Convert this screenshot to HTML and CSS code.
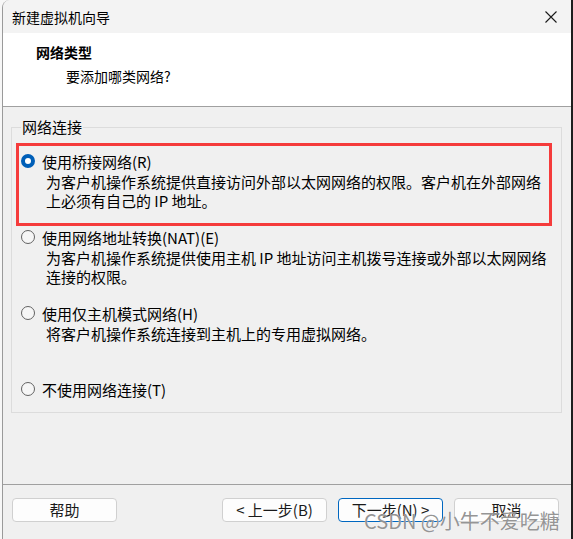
FILE: index.html
```html
<!DOCTYPE html>
<html lang="zh-CN">
<head>
  <meta charset="UTF-8">
  <title>新建虚拟机向导</title>
  <link rel="stylesheet" href="styles.css">
</head>
<body>
  <div class="window">
    <div class="titlebar">
      <span class="title">新建虚拟机向导</span>
      <svg class="close" width="12" height="12" viewBox="0 0 12 12">
        <path d="M0.5 0.5 L11.5 11.5 M11.5 0.5 L0.5 11.5" stroke="#1a1a1a" stroke-width="1.1" fill="none"/>
      </svg>
    </div>

    <div class="header">
      <div class="header-title">网络类型</div>
      <div class="header-sub">要添加哪类网络?</div>
    </div>

    <div class="content">
      <fieldset class="group">
        <legend>网络连接</legend>

        <div class="option highlighted">
          <div class="mark"></div>
          <label class="row"><span class="radio checked"></span>使用桥接网络(R)</label>
          <div class="desc">为客户机操作系统提供直接访问外部以太网网络的权限。客户机在外部网络<br>上必须有自己的 IP 地址。</div>
        </div>

        <div class="option">
          <label class="row"><span class="radio"></span>使用网络地址转换(NAT)(E)</label>
          <div class="desc">为客户机操作系统提供使用主机 IP 地址访问主机拨号连接或外部以太网网络<br>连接的权限。</div>
        </div>

        <div class="option">
          <label class="row"><span class="radio"></span>使用仅主机模式网络(H)</label>
          <div class="desc">将客户机操作系统连接到主机上的专用虚拟网络。</div>
        </div>

        <div class="option">
          <label class="row"><span class="radio"></span>不使用网络连接(T)</label>
        </div>
      </fieldset>
    </div>

    <div class="footer">
      <button class="btn">帮助</button>
      <div class="btn-group">
        <button class="btn">&lt; 上一步(B)</button>
        <button class="btn default">下一步(N) &gt;</button>
        <button class="btn">取消</button>
      </div>
    </div>

    <div class="watermark">CSDN @小牛不爱吃糖</div>
  </div>
</body>
</html>
```

FILE: styles.css
```css
html, body {
  margin: 0;
  padding: 0;
}
body {
  background: #f7f7f7;
  font-family: "Noto Sans CJK SC", "Noto Sans", sans-serif;
  color: #000;
}
.window {
  position: relative;
  box-sizing: border-box;
  margin-left: 2px;
  width: 571px;
  height: 539px;
  display: flex;
  flex-direction: column;
  background: #f0f0f0;
  border-left: 1px solid #9a9a9a;
  border-right: 2px solid #1e1e1e;
  border-top-left-radius: 8px;
  overflow: hidden;
}
.titlebar {
  height: 33px;
  flex: none;
  display: flex;
  align-items: center;
  justify-content: space-between;
  padding: 0 14px 0 9px;
  background: #f3f3f3;
  font-size: 14px;
}
.header {
  flex: none;
  background: #fff;
  border-bottom: 1px solid #a0a0a0;
  padding: 9px 0 0 33px;
  height: 64px;
}
.header-title {
  font-size: 14px;
  font-weight: bold;
  line-height: 20px;
}
.header-sub {
  font-size: 14px;
  line-height: 20px;
  margin: 4px 0 0 30px;
}
.content {
  flex: 1;
  padding: 10px 9px 0 8px;
}
.group {
  margin: 0;
  min-width: 0;
  border: 1px solid #dcdcdc;
  padding: 14px 9px 13px 9px;
  font-size: 15px;
}
.group legend {
  padding: 0 1px;
  line-height: 20px;
}
.option {
  position: relative;
  height: 76px;
}
.option:last-child {
  height: auto;
}
.row {
  display: flex;
  align-items: center;
  height: 20px;
  white-space: nowrap;
}
.radio {
  box-sizing: border-box;
  width: 14px;
  height: 14px;
  margin-right: 7px;
  border-radius: 50%;
  border: 1px solid #626262;
  background: #f6f6f6;
}
.radio.checked {
  border: 4px solid #005fb8;
  background: #fff;
}
.desc {
  margin: 1px 0 0 25px;
  line-height: 19px;
  white-space: nowrap;
}
.mark {
  position: absolute;
  left: -5px;
  top: -8px;
  width: 536px;
  height: 83px;
  box-sizing: border-box;
  border: 3px solid #f53b3b;
}
.footer {
  height: 41px;
  flex: none;
  border-top: 1px solid #a0a0a0;
  padding: 13px 12px 0 9px;
  display: flex;
  justify-content: space-between;
  align-items: flex-start;
}
.btn-group {
  display: flex;
  gap: 11px;
}
.btn {
  width: 105px;
  height: 24px;
  padding: 0;
  font-family: inherit;
  font-size: 15px;
  line-height: 20px;
  background: #fdfdfd;
  border: 1px solid #d0d0d0;
  border-radius: 4px;
  color: #1a1a1a;
}
.btn.default {
  border-color: #0067c0;
}
.watermark {
  position: absolute;
  left: 361px;
  top: 508px;
  font-size: 20px;
  line-height: 26px;
  color: rgba(120, 120, 120, 0.8);
  text-shadow: 0 0 1px #fff;
  white-space: nowrap;
  pointer-events: none;
}
```
